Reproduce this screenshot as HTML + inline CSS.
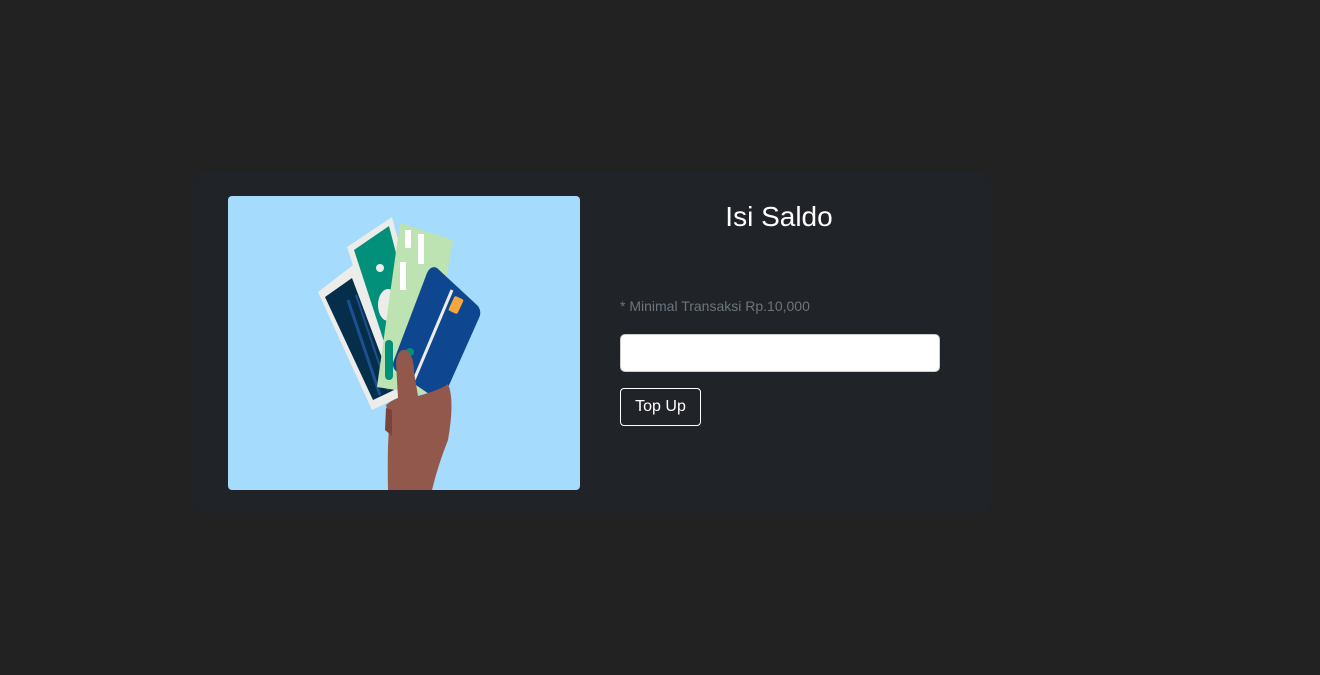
<!DOCTYPE html>
<html><head><meta charset="utf-8"><style>
html,body{margin:0;padding:0;background:#222222;width:1320px;height:675px;overflow:hidden;font-family:"Liberation Sans",sans-serif}
.card{position:absolute;left:192px;top:172px;width:800px;height:342px;background:#202327;border-radius:12px}
svg{position:absolute;left:228px;top:196px}
h1{position:absolute;left:620px;width:318px;top:197px;margin:0;text-align:center;color:#fff;font-weight:normal;font-size:28px;line-height:40px}
.note{position:absolute;left:620px;top:297px;color:#6c757d;font-size:14px;line-height:18px}
.inp{position:absolute;left:620px;top:334px;width:318px;height:36px;background:#fff;border:1px solid #ccc;border-radius:5px}
.btn{position:absolute;left:620px;top:388px;width:79px;height:36px;border:1px solid #fff;border-radius:4px;color:#fff;font-size:16px;line-height:36px;text-align:center}
</style></head><body>
<div class="card"></div>
<svg width="352" height="294" viewBox="228 196 352 294">
<defs><clipPath id="c"><rect x="228" y="196" width="352" height="294" rx="4"/></clipPath></defs>
<g clip-path="url(#c)">
<rect x="228" y="196" width="352" height="294" fill="#a5dbfd"/>
<polygon points="318,292 357,262 402,396 372,410" fill="#ececea"/>
<polygon points="325,297 352,278 394,390 373,400" fill="#052e4b"/>
<line x1="348" y1="300" x2="380" y2="395" stroke="#1e4f8f" stroke-width="3"/>
<line x1="356" y1="295" x2="388" y2="390" stroke="#1e4f8f" stroke-width="2"/>
<polygon points="347,247 392,217 422,332 383,358" fill="#ececea"/>
<polygon points="354,250 389,226 416,330 386,348" fill="#03907a"/>
<circle cx="380" cy="268" r="4" fill="#ececea"/>
<ellipse cx="388" cy="305" rx="10" ry="16" fill="#ececea"/>
<polygon points="400,223 453,240 426,395 377,387" fill="#bde3b2"/>
<rect x="405" y="230" width="6" height="18" fill="#fff"/>
<rect x="418" y="234" width="6" height="30" fill="#fff"/>
<rect x="400" y="262" width="6" height="28" fill="#fff"/>
<rect x="385" y="340" width="8" height="40" rx="4" fill="#03907a"/>
<path d="M437,268 L478,306 Q482,312 479,318 L446,392 Q440,400 432,396 L397,372 Q391,367 394,360 L427,273 Q431,265 437,268 Z" fill="#0e468f"/>
<line x1="452" y1="290" x2="414" y2="380" stroke="#ececea" stroke-width="3"/>
<rect x="451" y="297" width="10" height="16" rx="2" fill="#f6a63c" transform="rotate(25 456 305)"/>
<circle cx="410" cy="352" r="4" fill="#03907a"/>
<path d="M388,490 Q387,440 390,420 L386,405 Q392,400 398,398 L396,362 Q398,348 406,350 Q414,355 414,372 L418,396 Q440,390 448,384 Q455,400 448,440 Q438,465 432,490 Z" fill="#93584c"/>
<path d="M392,410 L386,408 L385,430 L392,436 Z" fill="#7a443a"/>
</g>
</svg>
<h1>Isi Saldo</h1>
<div class="note">* Minimal Transaksi Rp.10,000</div>
<div class="inp"></div>
<div class="btn">Top Up</div>
</body></html>
